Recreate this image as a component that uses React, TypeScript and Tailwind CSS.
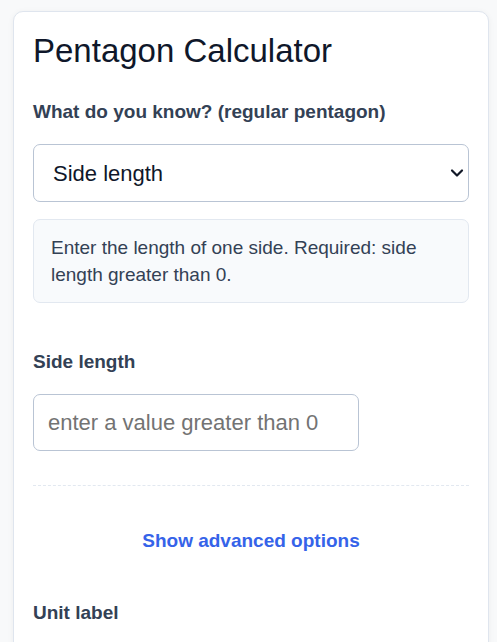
import { useState } from "react";

const shapes = ["Side length", "Perimeter", "Area", "Apothem", "Circumradius", "Diagonal"];

const hints: Record<string, string> = {
  "Side length": "Enter the length of one side. Required: side length greater than 0.",
  Perimeter: "Enter the perimeter. Required: perimeter greater than 0.",
  Area: "Enter the area. Required: area greater than 0.",
  Apothem: "Enter the apothem. Required: apothem greater than 0.",
  Circumradius: "Enter the circumradius. Required: circumradius greater than 0.",
  Diagonal: "Enter the diagonal. Required: diagonal greater than 0.",
};

const App = () => {
  const [known, setKnown] = useState("Side length");
  const [value, setValue] = useState("");
  const [unit, setUnit] = useState("");

  return (
    <div className="min-h-screen bg-[#f8f9fa] pl-[13px] pt-[11px] pr-[8px] font-['Liberation_Sans',Arial,sans-serif]">
      <div className="rounded-[10px] border border-[#dfe5ee] bg-white px-[19px] pt-[20px] pb-8 shadow-[0_1px_6px_rgba(15,23,42,0.05)]">
        <h1 className="text-[33px] leading-[37px] text-[#0f172a]">Pentagon Calculator</h1>

        <label className="mt-[32px] block text-[19px] font-bold leading-[22px] text-[#334155]">
          What do you know? (regular pentagon)
        </label>
        <div className="relative mt-[21px]">
          <select
            value={known}
            onChange={(e) => setKnown(e.target.value)}
            className="h-[58px] w-full appearance-none rounded-[7px] border border-[#b9c4d4] bg-white pl-[19px] pr-10 text-[22px] text-[#0f172a] outline-none"
          >
            {shapes.map((s) => (
              <option key={s}>{s}</option>
            ))}
          </select>
          <svg
            className="pointer-events-none absolute right-[5px] top-[24px] h-[10px] w-[14px]"
            viewBox="0 0 14 10"
            fill="none"
          >
            <path d="M2 2.5 7 7.5 12 2.5" stroke="#111827" strokeWidth="2.2" strokeLinecap="round" strokeLinejoin="round" />
          </svg>
        </div>

        <div className="mt-[17px] rounded-[7px] border border-[#e2e8f0] bg-[#f8fafc] px-[17px] py-[14px] text-[19px] leading-[27px] text-[#334155]">
          {hints[known]}
        </div>

        <label className="mt-[48px] block text-[19px] font-bold leading-[22px] text-[#334155]">
          {known}
        </label>
        <input
          value={value}
          onChange={(e) => setValue(e.target.value)}
          placeholder="enter a value greater than 0"
          className="mt-[21px] h-[57px] w-[326px] rounded-[7px] border border-[#b9c4d4] px-[14px] text-[22px] text-[#0f172a] outline-none placeholder:text-[#737373]"
        />

        <div className="mt-[34px] border-t border-dashed border-[#e2e8f0]" />

        <button className="mt-[44px] block w-full text-center text-[19px] font-bold leading-[22px] text-[#3563e9]">
          Show advanced options
        </button>

        <label className="mt-[50px] block text-[19px] font-bold leading-[22px] text-[#334155]">
          Unit label
        </label>
        <input
          value={unit}
          onChange={(e) => setUnit(e.target.value)}
          placeholder="e.g. cm"
          className="mt-[21px] h-[57px] w-[326px] rounded-[7px] border border-[#b9c4d4] px-[14px] text-[22px] text-[#0f172a] outline-none placeholder:text-[#737373]"
        />
      </div>
    </div>
  );
};

export default App;
